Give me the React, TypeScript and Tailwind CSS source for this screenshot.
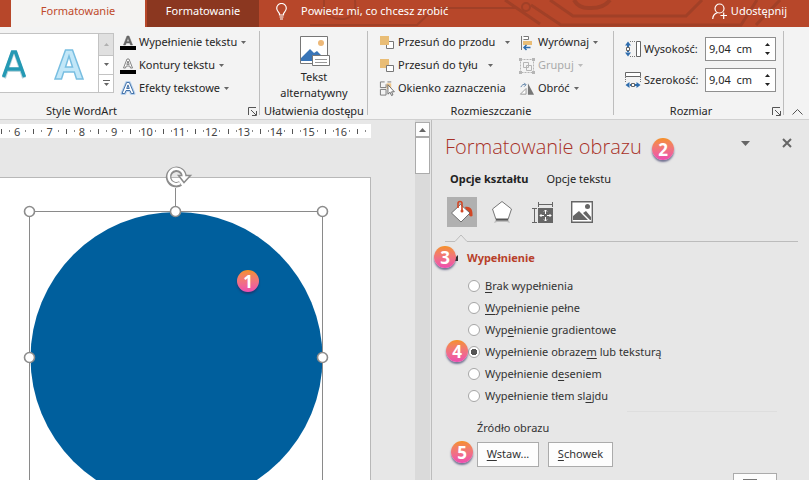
import { useState, type ReactNode } from "react";

function Caret({ className = "text-[#666666]" }: { className?: string }) {
  return (
    <svg width="5" height="3" viewBox="0 0 5 3" className={`shrink-0 ${className}`} aria-hidden="true">
      <path d="M0 0h5L2.5 3z" fill="currentColor" />
    </svg>
  );
}

function Badge({ n, className }: { n: number; className: string }) {
  return (
    <span
      className={`absolute z-10 flex size-[22px] items-center justify-center rounded-full bg-linear-to-b from-[#f5901e] to-[#ee4bb0] font-['Open_Sans'] text-[17px] leading-none font-bold text-white shadow-[0_2px_2px_rgba(40,40,90,0.6)] ${className}`}
    >
      {n}
    </span>
  );
}

function Launcher({ label }: { label: string }) {
  return (
    <button type="button" aria-label={label} className="absolute right-[3px] bottom-[3px] text-[#555555]">
      <svg width="9" height="9" viewBox="0 0 9 9" fill="none" stroke="currentColor">
        <path d="M.5 8V.5H8M3 3l5 5M8.500 4v4.500H4" />
      </svg>
    </button>
  );
}

function Group({ title, className, launcher, children }: { title: string; className: string; launcher?: boolean; children: ReactNode }) {
  return (
    <section className={`relative flex shrink-0 flex-col pt-1 ${className}`}>
      <div className="flex h-[72px]">{children}</div>
      <h2 className="h-4 text-center leading-4 whitespace-nowrap">{title}</h2>
      {launcher && <Launcher label={`${title} – opcje`} />}
      <span className="absolute top-1 right-0 bottom-1 w-px bg-[#bdbdbd]" />
    </section>
  );
}

function Cmd({ icon, label, caret, gap = "gap-1", disabled }: { icon: ReactNode; label: string; caret?: boolean; gap?: string; disabled?: boolean }) {
  return (
    <button type="button" disabled={disabled} className="flex h-[23px] items-center gap-[3px] whitespace-nowrap disabled:text-[#aaaaaa]">
      <span className="flex w-4 shrink-0 justify-center">{icon}</span>
      <span className={`flex items-center ${gap}`}>
        {label}
        {caret && <Caret className={disabled ? "text-[#bbbbbb]" : "text-[#666666]"} />}
      </span>
    </button>
  );
}

const letterA = "M1 12 5.600 1h2.800L13 12h-2.800L9 9H5L3.800 12zM5.700 7h2.600L7 3.400z";

const TextFill = () => (
  <svg width="16" height="16" viewBox="0 0 16 16">
    <path d="M3.500 10 7 1h2l3.500 9h-2L9.800 8H6.200l-.7 2zM6.800 6.400h2.400L8 3z" fill="#666" stroke="#666" strokeWidth=".5" />
    <path d="M0 11h16v4H0z" fill="#000" />
  </svg>
);
const TextOutline = () => (
  <svg width="16" height="16" viewBox="0 0 16 16">
    <path d="M3.500 10 7 1h2l3.500 9h-2L9.800 8H6.200l-.7 2zM6.800 6.400h2.400L8 3z" fill="#fff" stroke="#777" strokeWidth=".9" />
    <path d="M0 12h16v4H0z" fill="#000" />
  </svg>
);
const TextEffects = () => (
  <svg width="16" height="15" viewBox="-1 0 16 14">
    <path d={letterA} fill="#fff" stroke="#b8d2ee" strokeWidth="3" strokeLinejoin="round" />
    <path d={letterA} fill="#fff" stroke="#4472a8" strokeWidth="1" />
  </svg>
);
const Forward = () => (
  <svg width="16" height="16" viewBox="0 0 16 16">
    <path d="M8.500 6.500h6v7h-7v-4" fill="#fff" stroke="#777" />
    <path d="M1 1h9v9H1z" fill="#e9bd76" />
  </svg>
);
const Backward = () => (
  <svg width="16" height="16" viewBox="0 0 16 16">
    <path d="M1 1h9v9H1z" fill="#e9bd76" />
    <path d="M7.500 7.500h7v6h-7z" fill="#fff" stroke="#777" />
  </svg>
);
const SelectionPane = () => (
  <svg width="17" height="17" viewBox="0 0 17 17">
    <path d="M8 3h5v6H8z" fill="#f0c88d" />
    <path d="M6 1.500H1.500v6h6V4M1.500 9.500h6v6h-6zM9 1.500h4" fill="none" stroke="#777" />
    <path d="M9.500 4.500v10l2.300-2 1.500 3.500 1.500-.7-1.500-3.300h3z" fill="#fff" stroke="#666" />
  </svg>
);
const Align = () => (
  <svg width="16" height="16" viewBox="0 0 16 16">
    <path d="M2.500 1v14" stroke="#777" />
    <path d="M4.500 1.500h5v3h-5" fill="#fff" stroke="#777" />
    <path d="M4 6h9v4H4z" fill="#e9bd76" />
    <path d="M4.500 12.500h7M7.500 10 5 12.500 7.500 15" fill="none" stroke="#2f6dad" strokeWidth="1.500" />
  </svg>
);
const GroupIcon = () => (
  <svg width="16" height="16" viewBox="0 0 16 16" fill="none" stroke="#b5b5b5">
    <path d="M1.500 1.500h13v13h-13z" strokeDasharray="2 1" />
    <path d="M4.500 4.500h5v5h-5zM7.500 7.500h5v5h-5z" />
    <path d="M0 0h3v3H0zM13 0h3v3h-3zM0 13h3v3H0zM13 13h3v3h-3z" fill="#b5b5b5" stroke="none" />
  </svg>
);
const Rotate = () => (
  <svg width="17" height="14" viewBox="0 0 17 14">
    <path d="M9.500 1v12H16z" fill="#777" />
    <path d="M7.500 6.500v6h-6z" fill="#fff" stroke="#999" />
    <path d="M2 5c1-2.500 3-3.500 5-2.500M5.500.500 7.500 2.500 5.500 4.500" fill="none" stroke="#5b7fa5" />
  </svg>
);
const HeightIcon = () => (
  <svg width="17" height="17" viewBox="0 0 17 17">
    <path d="M11.500.500h4v15h-4z" fill="#fff" stroke="#666" />
    <path d="M5 .500h6M5 15.500h6" stroke="#777" strokeDasharray="1 1" />
    <path d="M0 4.500 3 .500l3 4zM0 11.500l3 4 3-4zM2 4h2v2H2zM2 10h2v2H2z" fill="#2f6dad" />
    <path d="M1.500 6.500h3v3h-3z" fill="#fff" stroke="#666" />
  </svg>
);
const WidthIcon = () => (
  <svg width="17" height="17" viewBox="0 0 17 17">
    <path d="M.500.500h15v4H.500z" fill="#fff" stroke="#666" />
    <path d="M.500 5v6M15.500 5v6" stroke="#777" strokeDasharray="1 1" />
    <path d="M4.500 10l-4 3 4 3zM11.500 10l4 3-4 3zM4 12h2v2H4zM10 12h2v2h-2z" fill="#2f6dad" />
    <path d="M6.500 11.500h3v3h-3z" fill="#fff" stroke="#666" />
  </svg>
);

function SizeField({ id, label, icon }: { id: string; label: string; icon: ReactNode }) {
  return (
    <div className="flex h-6 items-center">
      <span className="w-[19px] shrink-0">{icon}</span>
      <label htmlFor={id} className="w-[61px] shrink-0">
        {label}
      </label>
      <div className="flex h-6 w-[71px] border border-[#8f8f8f] bg-white">
        <input id={id} defaultValue="9,04  cm" className="w-[53px] min-w-0 bg-transparent pl-[3px] whitespace-pre outline-none" />
        <div className="flex flex-1 flex-col items-center justify-center gap-[6px]">
          <button type="button" aria-label={`${label} więcej`}>
            <Caret className="block rotate-180 text-[#222222]" />
          </button>
          <button type="button" aria-label={`${label} mniej`}>
            <Caret className="block text-[#222222]" />
          </button>
        </div>
      </div>
    </div>
  );
}

function Header() {
  return (
    <header className="relative flex h-[27px] items-stretch bg-[#b7472a] text-white">
      <svg className="absolute top-0 right-0" width="550" height="27" viewBox="259 0 550 27" fill="none" stroke="#a14027" strokeWidth="2" aria-hidden="true">
        <path d="M310 25h107l18-17h82M324 0v8q4 12 20 11 13-2 11-19" />
        <path d="M505 0l35 24M550 0l23 16h113l16-16M531 5l30 20h180l16-25M756 25l24-25" strokeWidth="3" />
        <circle cx="526" cy="7" r="4" />
        <path d="M574 0q5 9 17 8 13 0 19-8" strokeWidth="4" />
      </svg>
      <nav className="relative flex">
        <span className="w-[11px]" />
        <button type="button" className="w-[134px] bg-[#f4f3f2] pb-1 text-[#c04a2b]">
          Formatowanie
        </button>
        <span className="w-[2px]" />
        <button type="button" className="w-[112px] bg-[#8b3720] pb-1">
          Formatowanie
        </button>
      </nav>
      <button type="button" className="relative ml-[17px] flex items-center gap-[14px] pb-1">
        <svg width="11" height="17" viewBox="0 0 11 17" fill="none" stroke="#fff" strokeWidth="1.200">
          <path d="M3.500 12V10.500C2 8.500.700 7.500.700 5.300a4.800 4.800 0 0 1 9.600 0c0 2.200-1.300 3.200-2.800 5.200V12zM3.500 14h4M4 16h3" />
        </svg>
        Powiedz mi, co chcesz zrobić
      </button>
      <button type="button" className="relative mr-[22px] ml-auto flex items-center gap-1 pb-1">
        <svg width="15" height="17" viewBox="0 0 15 17" fill="none" stroke="#fff" strokeWidth="1.200">
          <circle cx="7.500" cy="5.500" r="4.500" />
          <path d="M.700 16c.300-4 2-5.500 4.800-6.300M8.500 12.500H15M11.700 9.500V16" />
        </svg>
        Udostępnij
      </button>
    </header>
  );
}

function Ribbon() {
  return (
    <div className="flex h-[93px] border-b border-[#d0d0d0] bg-[#f3f3f3]">
      <Group title="Style WordArt" className="w-[260px] [&>h2]:w-[163px]" launcher>
        <div className="mt-[2px] flex h-[60px] w-[114px] border border-l-0 border-[#c3c3c3] bg-white">
          <div className="flex flex-1 items-center pt-1 pl-[2px]">
            <svg width="24" height="30" viewBox="0 0 24 30">
              <path d="M2 28 10.500 3h3L22 28M5.500 20h13" fill="none" stroke="#b9d5dc" strokeWidth="4" />
              <path d="M1.500 27 10.500 2h3l9 25M5.500 19h13" fill="none" stroke="#2499b4" strokeWidth="3.500" />
            </svg>
            <svg className="ml-[28px]" width="30" height="32" viewBox="0 0 30 32">
              <path d="M1 30 11.500 1h7L29 30h-6.500l-2.200-7H9.700l-2.200 7zM11.500 18h7L15 7z" fill="#c2e7f8" stroke="#78bee1" strokeWidth="1.500" />
            </svg>
          </div>
          <div className="flex w-[15px] flex-col border-l border-[#c3c3c3]">
            <button type="button" aria-label="W górę" className="flex h-[21px] items-center justify-center bg-[#e0e0e0]">
              <Caret className="rotate-180 text-[#b0b0b0]" />
            </button>
            <button type="button" aria-label="W dół" className="flex flex-1 items-center justify-center border-t border-[#c3c3c3]">
              <Caret />
            </button>
            <button type="button" aria-label="Więcej stylów" className="flex flex-1 flex-col items-center justify-center gap-[2px] border-t border-[#c3c3c3]">
              <span className="h-px w-[7px] bg-[#666666]" />
              <Caret />
            </button>
          </div>
        </div>
        <div className="ml-[6px]">
          <Cmd icon={<TextFill />} label="Wypełnienie tekstu" caret />
          <Cmd icon={<TextOutline />} label="Kontury tekstu" caret />
          <Cmd icon={<TextEffects />} label="Efekty tekstowe" caret />
        </div>
      </Group>

      <Group title="Ułatwienia dostępu" className="w-[108px]">
        <button type="button" className="flex flex-1 flex-col items-center pt-1 leading-4">
          <svg className="mb-[3px]" width="31" height="31" viewBox="0 0 31 31">
            <path d="M1.500 1.500h27v27h-27z" fill="#fff" stroke="#777" />
            <circle cx="22" cy="8" r="3" fill="#edb878" />
            <path d="m2 23 9-9 4 4 3-2 7 7v3H2z" fill="#3975b7" />
            <path d="M13.500 20.500h17v10h-17z" fill="#fff" stroke="#777" />
            <path d="M16 24.500h12M16 27.500h12" stroke="#999" />
          </svg>
          Tekst
          <br />
          alternatywny
        </button>
      </Group>

      <Group title="Rozmieszczanie" className="w-[246px]">
        <div className="ml-[11px] w-[138px] shrink-0">
          <Cmd icon={<Forward />} label="Przesuń do przodu" gap="gap-[10px]" caret />
          <Cmd icon={<Backward />} label="Przesuń do tyłu" gap="gap-[10px]" caret />
          <Cmd icon={<SelectionPane />} label="Okienko zaznaczenia" />
        </div>
        <div className="ml-[2px]">
          <Cmd icon={<Align />} label="Wyrównaj" caret />
          <Cmd icon={<GroupIcon />} label="Grupuj" caret disabled />
          <Cmd icon={<Rotate />} label="Obróć" caret />
        </div>
      </Group>

      <Group title="Rozmiar" className="w-[170px] [&>h2]:w-[154px]" launcher>
        <div className="ml-[11px] flex flex-col gap-[7px] pt-[6px]">
          <SizeField id="height" label="Wysokość:" icon={<HeightIcon />} />
          <SizeField id="width" label="Szerokość:" icon={<WidthIcon />} />
        </div>
      </Group>

      <div className="flex flex-1 items-end justify-end pr-[6px] pb-1">
        <button type="button" aria-label="Zwiń wstążkę">
          <svg width="11" height="6" viewBox="0 0 11 6" fill="none" stroke="#555">
            <path d="M.500 5.500l5-5 5 5" />
          </svg>
        </button>
      </div>
    </div>
  );
}

const marks = [6, 7, 8, 9, 10, 11, 12, 13, 14, 15, 16];

function Ruler() {
  return (
    <div className="mt-1 flex h-[14px] w-[371px] items-center bg-white pl-px leading-none text-[#444444]">
      <div className="grid w-[356px] grid-cols-11">
        {marks.map((m) => (
          <div key={m} className="relative flex items-center justify-center">
            <span className="absolute left-0 h-[5px] w-px bg-[#555555]" />
            <span className="absolute left-1/4 h-[2px] w-px bg-[#888888]" />
            {m}
            <span className="absolute left-3/4 h-[2px] w-px bg-[#888888]" />
          </div>
        ))}
      </div>
      <span className="h-[5px] w-px bg-[#555555]" />
      <span className="ml-[7px] h-[2px] w-px bg-[#888888]" />
    </div>
  );
}

function Slide() {
  return (
    <div className="relative mt-[39px] w-[371px] flex-1 border-t border-r border-[#b8b8b8] bg-white">
      <svg className="absolute -top-[17px] left-0" width="370" height="320" viewBox="0 161 370 320" aria-label="Koło">
        <circle cx="176.500" cy="358" r="146" fill="#005f9d" />
        <path d="M29.500 500V211.500h293V500M175.500 211V188" fill="none" stroke="#8a8a8a" />
        <g fill="#fff" stroke="#8c8c8c" strokeWidth="1.600">
          <circle cx="29.500" cy="211.500" r="5" />
          <circle cx="175.500" cy="211.500" r="5" />
          <circle cx="322.500" cy="211.500" r="5" />
          <circle cx="29.500" cy="357.500" r="5" />
          <circle cx="322.500" cy="357.500" r="5" />
        </g>
        <path d="M180.500 183.500A7.700 7.700 0 1 1 184 176.500" fill="none" stroke="#8c8c8c" strokeWidth="5.500" />
        <path d="M178.500 175.500h12l-6.500 7z" fill="#fff" stroke="#8c8c8c" strokeWidth="1.500" />
        <path d="M180 183.200A7.700 7.700 0 1 1 184 177.500" fill="none" stroke="#fff" strokeWidth="2.500" />
      </svg>
      <Badge n={1} className="top-[92px] left-[237px]" />
    </div>
  );
}

const fills = [
  ["", "B", "rak wypełnienia"],
  ["", "W", "ypełnienie pełne"],
  ["Wyp", "e", "łnienie gradientowe"],
  ["Wypełnienie obraze", "m", " lub teksturą"],
  ["Wypełnienie d", "e", "seniem"],
  ["Wypełnienie tłem sl", "a", "jdu"],
];

function Pane() {
  const [fill, setFill] = useState(3);
  return (
    <aside className="relative flex w-[378px] shrink-0 flex-col border-l border-[#bdbdbd] pl-[13px] text-[#333333]">
      <div className="flex items-start pt-[12px] pr-[17px]">
        <h1 className="relative font-['Open_Sans'] text-xl leading-[30px] font-light whitespace-nowrap text-[#a83228]">
          Formatowanie obrazu
          <Badge n={2} className="top-[6px] left-[207px]" />
        </h1>
        <button type="button" aria-label="Opcje okienka" className="mt-[9px] ml-auto">
          <svg width="9" height="5" viewBox="0 0 9 5">
            <path d="M0 0h9L4.500 5z" fill="#666" />
          </svg>
        </button>
        <button type="button" aria-label="Zamknij" className="mt-[6px] ml-8">
          <svg width="10" height="10" viewBox="0 0 10 10" stroke="#666" strokeWidth="2">
            <path d="m1 1 8 8M9 1 1 9" />
          </svg>
        </button>
      </div>
      <div className="mt-[9px] flex gap-[18px] pl-[5px] leading-4 text-[#222222]">
        <button type="button" className="font-bold">Opcje kształtu</button>
        <button type="button">Opcje tekstu</button>
      </div>
      <div className="mt-[10px] flex gap-[10px] pl-[2px]">
        <button type="button" aria-label="Wypełnienie i linia" className="flex size-[30px] items-center justify-center bg-[#b0b0b0]">
          <svg width="24" height="24" viewBox="0 0 24 24">
            <path d="M15 7c6-1 8 3 7.500 9-2 1-3.500 0-3.500-2 0-2-1-3-3-4z" fill="#d24726" />
            <path d="M10.500 4.500 20 13l-9 9-9.500-9z" fill="#fff" stroke="#555" strokeWidth=".8" />
            <path d="M8 8V3.500q0-2 2-2t2 2V11" fill="none" stroke="#d24726" strokeWidth="1.600" />
            <circle cx="12" cy="11" r="1.500" fill="#d24726" />
          </svg>
        </button>
        <button type="button" aria-label="Efekty" className="flex size-[30px] items-center justify-center">
          <svg width="22" height="24" viewBox="0 0 22 24">
            <path d="M5 19h12l2 4-3-1H6l-3 1z" fill="#bcbcbc" />
            <path d="M11 1.500 20.500 9 17 19.500H5L1.500 9z" fill="#fff" stroke="#777" />
            <path d="M5 19.500h12" stroke="#555" strokeWidth="2" />
          </svg>
        </button>
        <button type="button" aria-label="Rozmiar i właściwości" className="flex size-[30px] items-center justify-center">
          <svg width="23" height="23" viewBox="0 0 23 23" fill="none" stroke="#666">
            <path d="M7.500 3.500h14M7.500 1v5M21.500 1v5M3.500 7.500v14M1 7.500h5M1 21.500h5" />
            <path d="M7 7h15v15H7z" fill="#666" stroke="none" />
            <path d="M14.500 9v4M14.500 16v4M9 14.500h4M16 14.500h4M13 10.500l1.500-1.500 1.500 1.500M13 18.500l1.500 1.500 1.500-1.500M10.500 13 9 14.500l1.500 1.500M18.500 13l1.500 1.500-1.500 1.500" stroke="#fff" />
          </svg>
        </button>
        <button type="button" aria-label="Obraz" className="flex size-[30px] items-center justify-center">
          <svg width="22" height="22" viewBox="0 0 22 22">
            <path d="M.700.700h20.600v20.600H.700z" fill="#fff" stroke="#666" strokeWidth="1.400" />
            <circle cx="16.500" cy="5.500" r="2.500" fill="#666" />
            <path d="M2 19v-4l6-5 9 9zM12 12l3-2 5 6v3h-1z" fill="#666" />
          </svg>
        </button>
      </div>
      <svg className="mt-[7px] block h-2 w-[353px] shrink-0" viewBox="0 0 353 8" fill="none" stroke="#bcbcbc" aria-hidden="true">
        <path d="M0 7.500h10l6-6.500 6 6.500h331" />
      </svg>

      <div className="relative mt-2">
        <button type="button" className="flex items-center leading-4 font-bold text-[#b8402a]">
          <span className="flex w-[22px] justify-end pr-[9px]">
            <svg width="6" height="6" viewBox="0 0 6 6" className="shrink-0">
              <path d="M6 0v6H0z" fill="#333" />
            </svg>
          </span>
          Wypełnienie
        </button>
        <Badge n={3} className="-top-[4px] -left-[11px]" />
      </div>

      <div role="radiogroup" aria-label="Wypełnienie" className="relative mt-[9px] pl-[23px]">
        {fills.map(([a, key, b], i) => (
          <label key={i} className="flex h-[22px] items-center gap-[5px] whitespace-nowrap">
            <input
              type="radio"
              name="fill"
              checked={fill === i}
              onChange={() => setFill(i)}
              className="size-3 appearance-none rounded-full border border-[#a6a6a6] bg-white checked:bg-[radial-gradient(circle,#555_3px,white_3.5px)]"
            />
            <span>
              {a}
              <u className="underline-offset-2">{key}</u>
              {b}
            </span>
          </label>
        ))}
        <Badge n={4} className="top-[65px] left-px" />
      </div>

      <hr className="mt-[4px] mr-[32px] ml-[182px] border-[#dedede]" />
      <p className="mt-[8px] pl-8 leading-4">Źródło obrazu</p>
      <div className="relative mt-[6px] flex gap-[9px] pl-8">
        <button type="button" className="h-[25px] w-[62px] border border-[#ababab] bg-[#fdfdfd]">
          <u className="underline-offset-2">W</u>staw...
        </button>
        <button type="button" className="h-[25px] w-[65px] border border-[#ababab] bg-[#fdfdfd]">
          <u className="underline-offset-2">S</u>chowek
        </button>
        <Badge n={5} className="-top-px left-[6px]" />
      </div>
      <button type="button" aria-label="Tekstura" className="mt-[6px] mr-8 flex h-6 w-11 shrink-0 self-end border border-[#ababab] bg-[#fdfdfd] pt-[5px] pl-[9px]">
        <span className="h-4 w-[14px] border border-[#777777] bg-[#e7e7e7]" />
      </button>
    </aside>
  );
}

export default function App() {
  return (
    <div className="flex h-screen flex-col overflow-hidden bg-[#e7e7e7] font-['Noto_Sans','Open_Sans',sans-serif] text-[11px] text-[#262626]">
      <Header />
      <Ribbon />
      <main className="flex min-h-0 flex-1">
        <div className="flex min-w-0 flex-1 flex-col">
          <Ruler />
          <Slide />
        </div>
        <div className="mr-px flex w-[15px] flex-col bg-[#dadada] pt-[2px]">
          <button type="button" aria-label="Przewiń w górę" className="flex h-[15px] items-center justify-center border border-[#ababab] bg-[#fdfdfd]">
            <svg width="7" height="4" viewBox="0 0 7 4">
              <path d="M0 4h7L3.500 0z" fill="#666" />
            </svg>
          </button>
          <div className="h-[37px] border border-[#ababab] bg-white" />
        </div>
        <Pane />
      </main>
    </div>
  );
}
